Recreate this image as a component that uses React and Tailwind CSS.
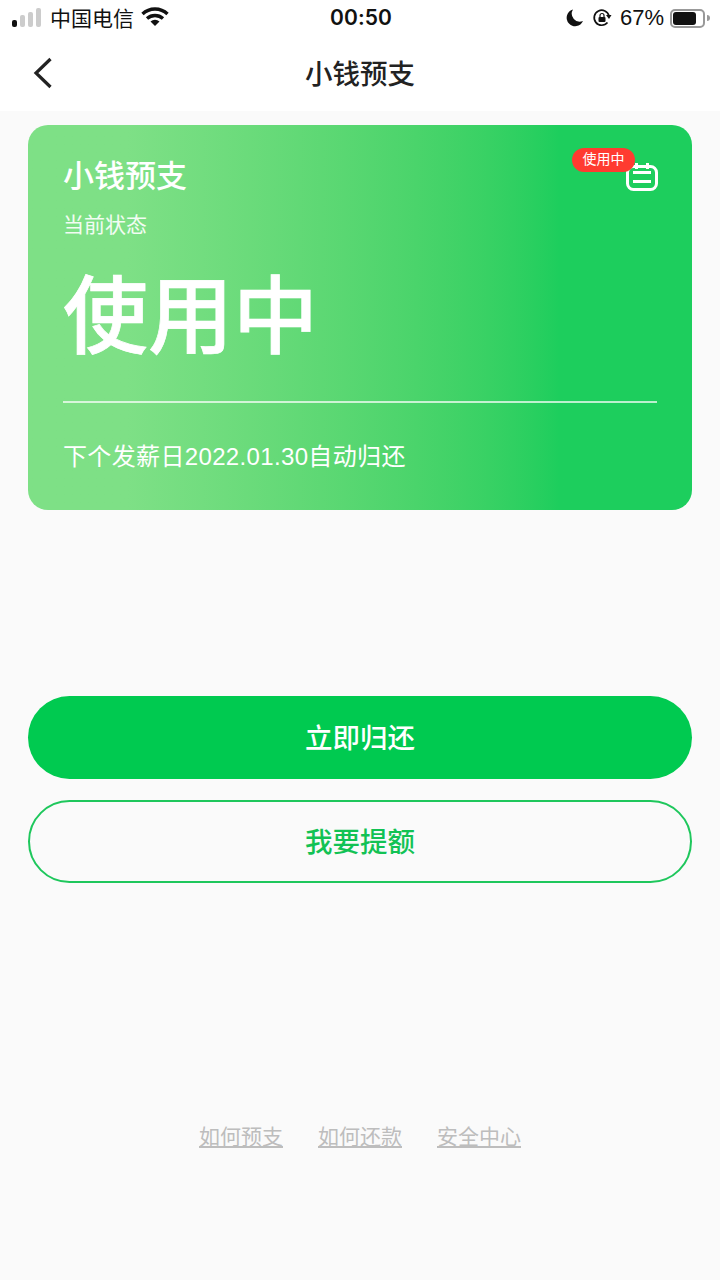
const font = { fontFamily: '"Liberation Sans", "Noto Sans CJK SC", sans-serif' }

const StatusBar = () => (
  <div className="h-10 pb-[4px] flex items-center justify-between bg-white text-[#111]">
    <div className="flex items-center pl-3">
      <svg width="30" height="20" viewBox="0 0 30 20">
        <rect x="0" y="12" width="5" height="7" rx="2" fill="#111" />
        <rect x="8" y="7" width="5" height="12" rx="2" fill="#ccc" />
        <rect x="16" y="4" width="5" height="15" rx="2" fill="#ccc" />
        <rect x="24" y="0" width="5" height="19" rx="2" fill="#ccc" />
      </svg>
      <span className="ml-[8px] text-[21px] leading-none w-[91px]">中国电信</span>
      <svg width="28" height="20" viewBox="0 0 28 20" className="-mt-[3px]">
        <path d="M1.5 7 A18 18 0 0 1 26.5 7" fill="none" stroke="#111" strokeWidth="3.4" />
        <path d="M6 11.5 A12 12 0 0 1 22 11.5" fill="none" stroke="#111" strokeWidth="3.4" />
        <path d="M9.5 14.5 A7 7 0 0 1 18.5 14.5 L14 19 Z" fill="#111" />
      </svg>
    </div>
    <span className="absolute left-[330px] top-[5px] font-['Inter'] text-[21px] leading-[26px] font-semibold tracking-[0.1px]">00:50</span>
    <div className="flex items-center pr-[10px]">
      <svg width="20" height="20" viewBox="0 0 20 20">
        <path d="M8 1.5 A8.5 8.5 0 1 0 18 13 A8 8 0 0 1 8 1.5 Z" fill="#111" />
      </svg>
      <svg width="20" height="20" viewBox="0 0 20 20" className="ml-[7px]">
        <path d="M15.5 14.5 A7.5 7.5 0 1 1 17 8" fill="none" stroke="#111" strokeWidth="1.7" />
        <path d="M14 7 L19.5 7 L17 11 Z" fill="#111" />
        <rect x="6.5" y="9" width="7" height="5" rx="1" fill="#111" />
        <path d="M8 9 V7.5 A2 2 0 0 1 12 7.5 V9" fill="none" stroke="#111" strokeWidth="1.2" />
      </svg>
      <span className="ml-[8px] text-[22px] leading-none w-[50px]">67%</span>
      <div className="w-[35px] h-[19px] rounded-[5px] border-2 border-[#999] p-[1px]">
        <div className="w-[23px] h-full rounded-[3px] bg-[#111]" />
      </div>
      <div className="ml-[2px] w-[3px] h-[6px] rounded-r bg-[#999]" />
    </div>
  </div>
)

const Header = () => (
  <div className="h-[71px] bg-white flex items-center justify-center relative">
    <svg width="24" height="34" viewBox="0 0 24 34" className="absolute left-[32px] top-[16px]">
      <path d="M18.5 3 L4 17 L18.5 31" fill="none" stroke="#222" strokeWidth="3.2" />
    </svg>
    <span className="text-[27.5px] font-medium text-[#222] leading-none -mt-[1px]">小钱预支</span>
  </div>
)

const StatusCard = () => (
  <div className="mx-[28px] mt-[14px] h-[385px] rounded-[20px] bg-gradient-to-r from-[#7ee086] to-[#1dce5d] from-[15%] to-[80%] px-[35px] text-white relative">
    <div className="pt-[32px] text-[31px] leading-[40px] font-medium">小钱预支</div>
    <div className="mt-[14px] text-[21px] leading-[28px] text-white/90">当前状态</div>
    <div className="mt-[29px] text-[85px] leading-[100px] font-medium [-webkit-text-stroke:0.7px_#fff]">使用中</div>
    <div className="mt-[33px] h-[2px] bg-white/70" />
    <div className="mt-[37px] text-[24px] leading-[34px] tracking-[0.35px]">下个发薪日2022.01.30自动归还</div>

    <svg width="32" height="28" viewBox="0 0 32 28" className="absolute left-[598px] top-[38px]">
      <rect x="1.5" y="3.5" width="29" height="23" rx="6" fill="none" stroke="#fff" strokeWidth="3" />
      <rect x="9" y="0" width="3" height="6" fill="#fff" />
      <rect x="20" y="0" width="3" height="6" fill="#fff" />
      <rect x="7" y="8" width="18" height="3" fill="#fff" />
      <rect x="7" y="17" width="18" height="3" fill="#fff" />
    </svg>
    <div className="absolute left-[544px] top-[23px] w-[63px] h-[24px] pb-[2px] rounded-full bg-[#ff3b30] flex items-center justify-center text-[14px] leading-none">
      使用中
    </div>
  </div>
)

const App = () => (
  <div className="w-[720px] h-[1280px] bg-[#fafafa] relative overflow-hidden" style={font}>
    <StatusBar />
    <Header />
    <StatusCard />

    <div className="mx-[28px] mt-[186px] flex flex-col gap-[21px]">
      <button className="h-[83px] pt-[2px] rounded-full bg-[#00ca50] text-white text-[27.5px] font-medium">立即归还</button>
      <button className="h-[83px] pt-[2px] rounded-full border-2 border-[#1ec75c] text-[#12c254] text-[27.5px] font-medium">我要提额</button>
    </div>

    <div className="mt-[240px] flex justify-center gap-[35px] text-[21px] leading-[28px] text-[#bdbdbd] underline">
      <span>如何预支</span>
      <span>如何还款</span>
      <span>安全中心</span>
    </div>
  </div>
)

export default App
